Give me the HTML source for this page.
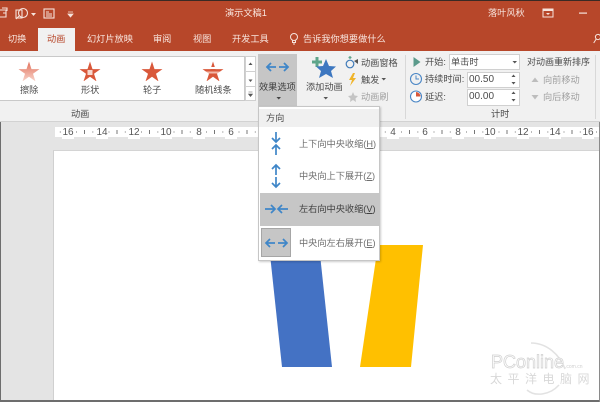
<!DOCTYPE html>
<html lang="zh">
<head>
<meta charset="utf-8">
<style>
html,body{margin:0;padding:0;background:#fff}
#p{position:relative;width:600px;height:402px;overflow:hidden;background:#e6e6e6;font-family:"Liberation Sans","Noto Sans CJK SC",sans-serif;font-size:9.2px;color:#4c4c4c}
#p div,#p svg{position:absolute}
.t{white-space:nowrap;line-height:12px;height:12px}
.w{color:#f8e6df}
.g{color:#a0a0a0}
.box{background:#fff;border:1px solid #d0d0d0;box-sizing:border-box}
.n{font-size:10px;background:#fff;color:#555;line-height:11px;top:127px;width:12px;text-align:center}
.m{color:#6e6e6e}
</style>
</head>
<body>
<div id="p">
<!-- title bar -->
<div style="left:0;top:0;width:600px;height:51px;background:#b7472a"></div>
<div style="left:0;top:0;width:600px;height:1px;background:#3a2a24"></div>
<svg style="left:0;top:0" width="80" height="28" fill="none" stroke="#f6e3dc" stroke-width="1.100">
<path d="M0 10h6v7h-6M2 8h5v3M3 13h3v3"/>
<path d="M16 10h6v8h-6z"/><circle cx="23" cy="13" r="4.500"/><path d="M19 16l-3 3"/>
<path d="M31 13h5l-2.500 3z" fill="#f6e3dc" stroke="none"/>
<rect x="44" y="9" width="10" height="9"/><path d="M46 12h3M46 14h6M46 16h6"/>
<path d="M68 12h5M68 14h5l-2.500 3z" fill="#f6e3dc" stroke-width=".8"/>
</svg>
<div class="t w" style="left:225px;top:7px;font-size:9.200px">演示文稿1</div>
<div class="t w" style="left:488px;top:7px">落叶风秋</div>
<svg style="left:540px;top:6px" width="50" height="14">
<rect x="3" y="3" width="10" height="8" fill="none" stroke="#f6e3dc"/><rect x="3" y="3" width="10" height="2" fill="#f6e3dc"/><path d="M6 7h4l-2 2z" fill="#f6e3dc"/>
<rect x="39" y="6.500" width="8" height="1.200" fill="#f6e3dc"/>
</svg>
<!-- tabs -->
<div class="t w" style="left:8px;top:33px">切换</div>
<div style="left:38px;top:28px;width:37px;height:25px;background:#f1f1f1"></div>
<div class="t" style="left:47px;top:33px;color:#b7472a">动画</div>
<div class="t w" style="left:87px;top:33px">幻灯片放映</div>
<div class="t w" style="left:153px;top:33px">审阅</div>
<div class="t w" style="left:193px;top:33px">视图</div>
<div class="t w" style="left:232px;top:33px">开发工具</div>
<svg style="left:288px;top:32px" width="12" height="14" fill="none" stroke="#f6e3dc"><circle cx="6" cy="5" r="3.500"/><path d="M4.500 8.500v2h3v-2M5 12h2"/></svg>
<div class="t w" style="left:303px;top:33px">告诉我你想要做什么</div>
<svg style="left:593px;top:33px" width="7" height="11" fill="none" stroke="#f6e3dc"><circle cx="5" cy="4" r="2.600"/><path d="M3.200 6l-2.500 4"/></svg>
<!-- ribbon -->
<div style="left:0;top:51px;width:600px;height:71px;background:#f1f1f1;border-bottom:1px solid #d2d2d2;box-sizing:border-box"></div>
<div class="box" style="left:-2px;top:56px;width:247px;height:45px;border-color:#c9c9c9"></div>
<div class="box" style="left:245px;top:56px;width:11px;height:16px"></div>
<div class="box" style="left:245px;top:71px;width:11px;height:16px"></div>
<div class="box" style="left:245px;top:86px;width:11px;height:15px"></div>
<svg style="left:245px;top:56px" width="11" height="45" fill="#555">
<path d="M3.500 9h4l-2-2.500z"/><path d="M3.500 23.500h4l-2 2.500z"/><path d="M3.500 36h4M3.500 38h4l-2 2.500z" stroke="#555" stroke-width=".6"/>
</svg>
<svg width="0" height="0" style="left:0;top:0"><defs>
<linearGradient id="f1" x1="0" y1="0" x2="0" y2="1"><stop offset="0" stop-color="#e2705a"/><stop offset="1" stop-color="#f8d4ca"/></linearGradient>
<linearGradient id="f4" x1="0" y1="0" x2="0" y2="1">
<stop offset="0" stop-color="#d9583a"/><stop offset=".28" stop-color="#d9583a"/><stop offset=".28" stop-color="#fff"/><stop offset=".38" stop-color="#fff"/><stop offset=".38" stop-color="#d9583a"/><stop offset=".5" stop-color="#d9583a"/><stop offset=".5" stop-color="#f2b8a8"/><stop offset=".6" stop-color="#f2b8a8"/><stop offset=".6" stop-color="#d9583a"/><stop offset="1" stop-color="#d9583a"/>
</linearGradient>
</defs></svg>
<svg style="left:18px;top:61px" width="22" height="20" viewBox="-11 -11.500 22 20"><polygon fill="url(#f1)" points="0,-11 2.500,-3.400 10.500,-3.400 4,1.300 6.500,8.900 0,4.200 -6.500,8.900 -4,1.300 -10.500,-3.400 -2.500,-3.400"/></svg>
<svg style="left:79px;top:61px" width="22" height="20" viewBox="-11 -11.500 22 20"><polygon fill="#d9583a" points="0,-11 2.500,-3.400 10.500,-3.400 4,1.300 6.500,8.900 0,4.200 -6.500,8.900 -4,1.300 -10.500,-3.400 -2.500,-3.400"/><rect x="-2.500" y="-2.500" width="5" height="5" fill="#f7d8ce"/></svg>
<svg style="left:141px;top:61px" width="22" height="20" viewBox="-11 -11.500 22 20"><polygon fill="#d9583a" points="0,-11 2.500,-3.400 10.500,-3.400 4,1.300 6.500,8.900 0,4.200 -6.500,8.900 -4,1.300 -10.500,-3.400 -2.500,-3.400"/></svg>
<svg style="left:202px;top:61px" width="22" height="20" viewBox="-11 -11.500 22 20"><polygon fill="url(#f4)" points="0,-11 2.500,-3.400 10.500,-3.400 4,1.300 6.500,8.900 0,4.200 -6.500,8.900 -4,1.300 -10.500,-3.400 -2.500,-3.400"/></svg>
<div class="t" style="left:20px;top:84px">擦除</div>
<div class="t" style="left:81px;top:84px">形状</div>
<div class="t" style="left:143px;top:84px">轮子</div>
<div class="t" style="left:195px;top:84px">随机线条</div>
<div class="t" style="left:71px;top:108px">动画</div>
<!-- effect options -->
<div style="left:258px;top:54px;width:39px;height:53px;background:#c6c6c6"></div>
<svg style="left:265px;top:61px" width="25" height="12" fill="none" stroke="#3f86c8" stroke-width="1.800">
<path d="M2 6h9M6 2L2 6l4 4M14 6h9M19 2l4 4-4 4"/>
</svg>
<div class="t" style="left:259px;top:81px;color:#3f3f3f">效果选项</div>
<svg style="left:276px;top:96px" width="6" height="5"><path d="M0.500 1h4.500l-2.250 2.500z" fill="#444"/></svg>
<!-- add animation -->
<svg style="left:309px;top:55px" width="28" height="28">
<path d="M6.500 2h3v3.500H13v3H9.500V12h-3V8.500H3v-3h3.500z" fill="#5ea58a"/>
<polygon fill="#3d77c0" points="17,4 20,11 27,11.500 22,16 24,23 17,19 10,23 12,16 7,11.500 14,11"/>
</svg>
<div class="t" style="left:306px;top:81px">添加动画</div>
<svg style="left:323px;top:96px" width="6" height="5"><path d="M0.500 1h4.500l-2.250 2.500z" fill="#555"/></svg>
<svg style="left:345px;top:55px" width="15" height="50">
<circle cx="5" cy="9" r="3.800" fill="none" stroke="#3f7ab8" stroke-width="1.200"/><path d="M5 1v3M3.500 2.500h3" stroke="#5ea58a" stroke-width="1.200"/><path d="M9 6l4-2v5z" fill="#555"/>
<path d="M8 18l-4 7h3l-2 6 6-8H8l2-5z" fill="#f0b429"/>
<polygon fill="#c4c4c4" points="8,37 9.500,40.500 13,41 10.500,43.500 11,47 8,45 5,47 5.500,43.500 3,41 6.500,40.500"/>
</svg>
<div class="t" style="left:361px;top:57px">动画窗格</div>
<div class="t" style="left:361px;top:74px">触发</div>
<svg style="left:381px;top:77px" width="6" height="5"><path d="M0.500 1h4.500l-2.250 2.500z" fill="#555"/></svg>
<div class="t g" style="left:361px;top:91px">动画刷</div>
<div style="left:405px;top:55px;width:1px;height:64px;background:#d8d8d8"></div>
<div style="left:595px;top:55px;width:1px;height:64px;background:#d8d8d8"></div>
<!-- timing -->
<svg style="left:412px;top:56px" width="12" height="12"><path d="M1.500 1l7 5-7 5z" fill="#5b9a8b"/></svg>
<svg style="left:408px;top:72px" width="16" height="34" fill="none">
<circle cx="8" cy="7" r="5.500" stroke="#4a86c5" stroke-width="1.100"/><path d="M8 3.500V7h3" stroke="#4a86c5"/>
<circle cx="8" cy="24.500" r="5.500" stroke="#4a86c5" stroke-width="1.100" fill="#fff"/><path d="M8 24.500V20A4.500 4.500 0 0 1 12.500 24.500z" fill="#d9583a"/>
</svg>
<div class="t" style="left:425px;top:56px">开始:</div>
<div class="box" style="left:449px;top:54px;width:71px;height:16px"></div>
<div class="t" style="left:451px;top:56px">单击时</div>
<svg style="left:512px;top:60px" width="6" height="5"><path d="M0.500 1h4.500l-2.250 2.500z" fill="#555"/></svg>
<div class="t" style="left:425px;top:73px">持续时间:</div>
<div class="box" style="left:467px;top:72px;width:53px;height:16px"></div>
<div class="t" style="left:469px;top:74px;font-size:10px">00.50</div>
<div class="t" style="left:425px;top:91px">延迟:</div>
<div class="box" style="left:467px;top:89px;width:53px;height:17px"></div>
<div class="t" style="left:469px;top:91px;font-size:10px">00.00</div>
<svg style="left:510px;top:72px" width="8" height="32" fill="#555"><path d="M1.500 5h4L3.500 2.500zM1.500 10h4l-2 2.500zM1.500 22h4l-2-2.500zM1.500 27h4l-2 2.500z"/></svg>
<div class="t" style="left:527px;top:56px;font-size:9px">对动画重新排序</div>
<svg style="left:531px;top:75px" width="10" height="26" fill="#bdbdbd"><path d="M0.500 7h7L4 2.500zM0.500 20h7L4 24.500z"/></svg>
<div class="t g" style="left:543px;top:74px">向前移动</div>
<div class="t g" style="left:543px;top:91px">向后移动</div>
<div class="t" style="left:491px;top:108px">计时</div>
<!-- ruler -->
<div style="left:1px;top:122px;width:598px;height:278px;background:#e4e4e4"></div>
<div style="left:55px;top:127px;width:545px;height:10px;background:#fff"></div>
<svg style="left:55px;top:127px" width="545" height="10">
<defs><pattern id="tk" x="13" y="0" width="32.500" height="10" patternUnits="userSpaceOnUse">
<rect x="8" y="4.500" width="1" height="1" fill="#777"/><rect x="16" y="3" width="1" height="4" fill="#777"/><rect x="24.300" y="4.500" width="1" height="1" fill="#777"/>
</pattern></defs>
<rect width="545" height="10" fill="url(#tk)"/>
</svg>
<div class="t n" style="left:62px">16</div>
<div class="t n" style="left:96px">14</div>
<div class="t n" style="left:128px">12</div>
<div class="t n" style="left:160px">10</div>
<div class="t n" style="left:193px">8</div>
<div class="t n" style="left:225px">6</div>
<div class="t n" style="left:387px">4</div>
<div class="t n" style="left:419px">6</div>
<div class="t n" style="left:452px">8</div>
<div class="t n" style="left:484px">10</div>
<div class="t n" style="left:517px">12</div>
<div class="t n" style="left:549px">14</div>
<div class="t n" style="left:582px">16</div>
<!-- slide -->
<div style="left:53px;top:150px;width:547px;height:250px;background:#fff;border-left:1px solid #d0d0d0;border-top:1px solid #d4d4d4;box-sizing:border-box"></div>
<svg style="left:54px;top:151px" width="546" height="249">
<polygon fill="#4472c4" points="215,94 265,94 278,216 228,216"/>
<polygon fill="#ffc000" points="324,94 369,94 357,216 306,216"/>
</svg>
<!-- watermark -->
<svg style="left:485px;top:335px" width="115" height="65">
<path d="M46 8C62 8 75 20 80 34M42 55C50 62 65 60 74 50" fill="none" stroke="#e2e2e2" stroke-width="1.500"/>
<text x="6" y="33" font-family="Liberation Sans" font-size="18" fill="#fff" stroke="#d0d0d0" stroke-width=".7">PConline</text>
<text x="80" y="33" font-family="Liberation Sans" font-size="5" fill="#d0d0d0">.com.cn</text>
<text x="5" y="48" font-family="Noto Sans CJK SC" font-size="12" letter-spacing="5.500" fill="#d8d8d8">太平洋电脑网</text>
</svg>
<!-- menu -->
<div style="left:258px;top:106px;width:122px;height:155px;background:#fff;border:1px solid #c6c6c6;box-sizing:border-box;box-shadow:1px 1px 2px rgba(0,0,0,.2)"></div>
<div style="left:259px;top:109px;width:120px;height:18px;background:#f0f0f0"></div>
<div class="t" style="left:266px;top:112px">方向</div>
<svg style="left:259px;top:127px" width="40" height="132" fill="none" stroke="#3f86c8" stroke-width="1.700">
<path d="M17 5v10M13 11l4 4 4-4M17 28V18M13 22l4-4 4 4"/>
<path d="M17 48V38M13 42l4-4 4 4M17 50v10M13 56l4 4 4-4"/>
</svg>
<div style="left:260px;top:193px;width:119px;height:33px;background:#c6c6c6"></div>
<div style="left:261px;top:228px;width:30px;height:29px;background:#c6c6c6;border:1px solid #a6a6a6;box-sizing:border-box"></div>
<svg style="left:264px;top:203px" width="26" height="12" fill="none" stroke="#3f86c8" stroke-width="1.700"><path d="M1 6h10M7 2l4 4-4 4M24 6H14M18 2l-4 4 4 4"/></svg>
<svg style="left:264px;top:237px" width="26" height="12" fill="none" stroke="#3f86c8" stroke-width="1.700"><path d="M2 6h9M6 2L2 6l4 4M14 6h9M19 2l4 4-4 4"/></svg>
<div class="t m" style="left:299px;top:138px">上下向中央收缩(<u>H</u>)</div>
<div class="t m" style="left:299px;top:170px">中央向上下展开(<u>Z</u>)</div>
<div class="t" style="left:299px;top:203px;color:#3f3f3f">左右向中央收缩(<u>V</u>)</div>
<div class="t m" style="left:299px;top:237px">中央向左右展开(<u>E</u>)</div>
<!-- frame -->
<div style="left:0;top:122px;width:1px;height:280px;background:#6d6d6d"></div>
<div style="left:0;top:400px;width:600px;height:2px;background:#6d6d6d"></div>
<div style="left:599px;top:122px;width:1px;height:280px;background:#8a8a8a"></div>
</div>
</body>
</html>
